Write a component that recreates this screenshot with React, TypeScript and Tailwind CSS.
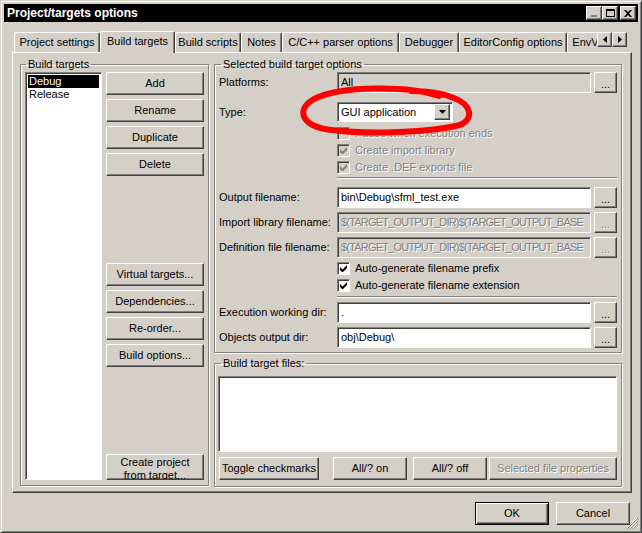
import React from 'react';

const raised =
  'border border-t-white border-l-white border-r-[#404040] border-b-[#404040] shadow-[inset_-1px_-1px_0_#808080]';
const sunken =
  'border border-t-[#808080] border-l-[#808080] border-r-white border-b-white shadow-[inset_1px_1px_0_#404040]';
const etched =
  'border border-[#808080] shadow-[1px_1px_0_#fff,inset_1px_1px_0_#fff] min-w-0';
const grayText = 'text-[#808080] [text-shadow:1px_1px_0_#fff]';

interface BtnProps {
  children: React.ReactNode;
  className?: string;
  disabled?: boolean;
}

const Btn: React.FC<BtnProps> = ({ children, className = '', disabled }) => (
  <div
    className={`flex items-center justify-center bg-[#d4d0c8] whitespace-nowrap ${raised} ${
      disabled ? grayText : 'text-black'
    } ${className}`}
  >
    {children}
  </div>
);

const Dots: React.FC<{ disabled?: boolean }> = ({ disabled }) => (
  <Btn className="w-[23px] h-[21px] ml-[3px] pt-[3px]" disabled={disabled}>
    ...
  </Btn>
);

const Field: React.FC<{ value: string; gray?: boolean; disabled?: boolean }> = ({ value, gray, disabled }) => (
  <div
    className={`w-[254px] h-[21px] flex items-center px-[3px] overflow-hidden whitespace-nowrap ${sunken} ${
      gray || disabled ? 'bg-[#d4d0c8]' : 'bg-white'
    } ${disabled ? `${grayText} tracking-[-0.8px]` : 'text-black'}`}
  >
    {value}
  </div>
);

const Row: React.FC<{ label: string; value: string; gray?: boolean; disabled?: boolean; className?: string }> = ({
  label,
  value,
  gray,
  disabled,
  className = '',
}) => (
  <div className={`flex items-center h-[21px] ${className}`}>
    <div className="w-[118px] whitespace-nowrap">{label}</div>
    <Field value={value} gray={gray} disabled={disabled} />
    <Dots disabled={disabled} />
  </div>
);

const Check: React.FC<{ label: string; checked?: boolean; disabled?: boolean }> = ({ label, checked, disabled }) => (
  <div className="flex items-center h-[17px] pl-[118px]">
    <div
      className={`w-[13px] h-[13px] flex items-center justify-center ${sunken} ${
        disabled ? 'bg-[#d4d0c8]' : 'bg-white'
      }`}
    >
      {checked && (
        <svg width="7" height="7" viewBox="0 0 7 7">
          <path d="M0 2v3l2 2h1l4-4V0L2.5 4.5z" fill={disabled ? '#808080' : '#000'} />
        </svg>
      )}
    </div>
    <span className={`ml-[5px] whitespace-nowrap ${disabled ? grayText : ''}`}>{label}</span>
  </div>
);

const Sep: React.FC<{ className?: string }> = ({ className = '' }) => (
  <div className={`ml-[118px] mr-[1px] h-[2px] border-t border-t-[#808080] border-b border-b-white ${className}`} />
);

const TABS = [
  { name: 'Project settings', w: 'w-[86px]' },
  { name: 'Build targets', w: 'w-[75px]', active: true },
  { name: 'Build scripts', w: 'w-[66px]' },
  { name: 'Notes', w: 'w-[41px]' },
  { name: 'C/C++ parser options', w: 'w-[117px]' },
  { name: 'Debugger', w: 'w-[60px]' },
  { name: 'EditorConfig options', w: 'w-[108px]' },
  { name: 'EnvVars options', w: 'w-[90px]' },
];

const CaptionBtn: React.FC<{ children: React.ReactNode; className?: string }> = ({ children, className = '' }) => (
  <div className={`w-[16px] h-[14px] bg-[#d4d0c8] flex items-center justify-center ${raised} ${className}`}>
    {children}
  </div>
);

export default function App() {
  return (
    <div className="relative w-[642px] h-[533px] bg-[#d4d0c8] border border-t-[#d4d0c8] border-l-[#d4d0c8] border-r-[#404040] border-b-[#404040] shadow-[inset_1px_1px_0_#fff,inset_-1px_-1px_0_#808080] p-[3px] flex flex-col text-[11px] leading-[13px] text-black font-['Liberation_Sans',Arial,sans-serif] overflow-hidden select-none">
      {/* caption */}
      <div className="h-[18px] bg-black flex items-center pl-[3px] pr-[2px] shrink-0">
        <span className="text-white font-bold text-[12px] flex-1">Project/targets options</span>
        <CaptionBtn>
          <div className="w-[6px] h-[2px] bg-[#808080] mt-[6px] mr-[1px]" />
        </CaptionBtn>
        <CaptionBtn>
          <div className="w-[9px] h-[8px] border border-black border-t-2" />
        </CaptionBtn>
        <CaptionBtn className="ml-[2px]">
          <svg width="8" height="7" viewBox="0 0 8 7">
            <path d="M0 0h2l2 2 2-2h2L5 3.5 8 7H6L4 5 2 7H0l3-3.5z" fill="#000" />
          </svg>
        </CaptionBtn>
      </div>

      {/* tabs */}
      <div className="flex items-start h-[23px] mt-[8px] -mb-[1px] pl-[10px] relative z-10 shrink-0">
        <div className="flex items-end w-[583px] h-[23px] overflow-hidden">
          {TABS.map(t => (
            <div
              key={t.name}
              className={`shrink-0 flex items-center justify-center whitespace-nowrap bg-[#d4d0c8] border-t border-l border-r border-t-white border-l-white border-r-[#404040] shadow-[inset_-1px_0_0_#808080] rounded-tl-[2px] rounded-tr-[2px] ${t.w} ${
                t.active ? 'h-[22px] pb-[2px]' : 'h-[20px] mb-[1px]'
              }`}
            >
              {t.name}
            </div>
          ))}
        </div>
        <div className="flex mt-[2px]">
          <Btn className="w-[15px] h-[15px]">
            <svg width="4" height="7" viewBox="0 0 4 7">
              <path d="M4 0v7L0 3.5z" fill="#000" />
            </svg>
          </Btn>
          <Btn className="w-[15px] h-[15px]">
            <svg width="4" height="7" viewBox="0 0 4 7">
              <path d="M0 0v7l4-3.5z" fill="#000" />
            </svg>
          </Btn>
        </div>
      </div>

      {/* tab page */}
      <div className="ml-[8px] w-[620px] h-[441px] shrink-0 border border-t-white border-l-white border-r-[#404040] border-b-[#404040] shadow-[inset_-1px_-1px_0_#808080] pl-[7px] pt-[5px] flex gap-[5px]">
        {/* Build targets group */}
        <fieldset className={`w-[189px] h-[428px] pl-[4px] pr-[4px] ${etched}`}>
          <legend className="ml-[1px] px-[2px] leading-[13px]">Build targets</legend>
          <div className="flex h-[409px] pt-[1px]">
            <div className={`w-[77px] h-[408px] bg-white p-[2px] ${sunken}`}>
              <div className="h-[13px] bg-black text-white pl-[1px]">Debug</div>
              <div className="h-[13px] pl-[1px]">Release</div>
            </div>
            <div className="ml-[4px] w-[98px] flex flex-col gap-[4px]">
              <Btn className="h-[23px]">Add</Btn>
              <Btn className="h-[23px]">Rename</Btn>
              <Btn className="h-[23px]">Duplicate</Btn>
              <Btn className="h-[23px]">Delete</Btn>
              <Btn className="h-[23px] mt-[83px]">Virtual targets...</Btn>
              <Btn className="h-[23px]">Dependencies...</Btn>
              <Btn className="h-[23px]">Re-order...</Btn>
              <Btn className="h-[23px]">Build options...</Btn>
              <Btn className="h-[26px] mt-auto items-start pt-[1px] overflow-hidden">
                <span className="text-center leading-[13px] whitespace-normal">
                  Create project
                  <br />
                  from target...
                </span>
              </Btn>
            </div>
          </div>
        </fieldset>

        <div className="flex flex-col gap-[4px]">
          {/* Selected build target options */}
          <fieldset className={`w-[408px] h-[295px] pl-[4px] pr-[3px] ${etched}`}>
            <legend className="ml-[2px] px-[2px] leading-[13px]">Selected build target options</legend>
            <div className="pt-[1px]">
              <Row label="Platforms:" value="All" gray />
              <div className="flex items-center h-[20px] mt-[9px]">
                <div className="w-[118px]">Type:</div>
                <div className={`w-[116px] h-[20px] bg-white flex items-center p-[2px] ${sunken}`}>
                  <span className="flex-1 pl-[1px]">GUI application</span>
                  <Btn className="w-[16px] h-[16px]">
                    <svg width="7" height="4" viewBox="0 0 7 4">
                      <path d="M0 0h7L3.5 4z" fill="#000" />
                    </svg>
                  </Btn>
                </div>
              </div>
              <div className="mt-[3px]">
                <Check label="Pause when execution ends" disabled />
                <Check label="Create import library" checked disabled />
                <Check label="Create .DEF exports file" checked disabled />
              </div>
              <Sep className="mt-[1px]" />
              <Row className="mt-[8px]" label="Output filename:" value="bin\Debug\sfml_test.exe" />
              <Row
                className="mt-[4px]"
                label="Import library filename:"
                value="$(TARGET_OUTPUT_DIR)$(TARGET_OUTPUT_BASE"
                disabled
              />
              <Row
                className="mt-[4px]"
                label="Definition file filename:"
                value="$(TARGET_OUTPUT_DIR)$(TARGET_OUTPUT_BASE"
                disabled
              />
              <div className="mt-[2px]">
                <Check label="Auto-generate filename prefix" checked />
                <Check label="Auto-generate filename extension" checked />
              </div>
              <Sep className="mt-[2px]" />
              <Row className="mt-[4px]" label="Execution working dir:" value="." />
              <Row className="mt-[4px]" label="Objects output dir:" value="obj\Debug\" />
            </div>
          </fieldset>

          {/* Build target files */}
          <fieldset className={`w-[408px] h-[130px] pl-[3px] pr-[3px] ${etched}`}>
            <legend className="ml-[3px] px-[2px] leading-[13px]">Build target files:</legend>
            <div className={`mt-[6px] w-[399px] h-[76px] bg-white ${sunken}`} />
            <div className="flex mt-[5px] pl-[1px]">
              <Btn className="w-[100px] h-[23px]">Toggle checkmarks</Btn>
              <Btn className="w-[74px] h-[23px] ml-[14px]">All/? on</Btn>
              <Btn className="w-[74px] h-[23px] ml-[6px]">All/? off</Btn>
              <Btn className="w-[128px] h-[23px] ml-[2px]" disabled>
                Selected file properties
              </Btn>
            </div>
          </fieldset>
        </div>
      </div>

      {/* dialog buttons */}
      <div className="flex justify-end gap-[7px] mt-[9px] pr-[8px] shrink-0">
        <div className="w-[74px] h-[23px] flex items-center justify-center bg-[#d4d0c8] border border-black shadow-[inset_1px_1px_0_#fff,inset_-1px_-1px_0_#404040,inset_-2px_-2px_0_#808080]">
          OK
        </div>
        <Btn className="w-[74px] h-[23px]">Cancel</Btn>
      </div>

      {/* size grip */}
      <svg className="absolute right-[3px] bottom-[3px]" width="12" height="12" viewBox="0 0 12 12">
        <path d="M11 1L1 11M11 4L4 11M11 7L7 11" stroke="#fff" strokeWidth="1" />
        <path d="M12 1L1 12M12 4L4 12M12 7L7 12" stroke="#808080" strokeWidth="1" />
      </svg>

      {/* red annotation */}
      <svg className="absolute left-0 top-0 pointer-events-none" width="642" height="533" viewBox="0 0 642 533">
        <path
          d="M438 95 C410 85 340 84 313 98 C295 108 299 125 330 129 C370 134 430 131 459 124 C473 118 471 104 453 97 C441 92 425 90 410 90"
          fill="none"
          stroke="#ff0000"
          strokeWidth="6"
          strokeLinecap="round"
        />
      </svg>
    </div>
  );
}
